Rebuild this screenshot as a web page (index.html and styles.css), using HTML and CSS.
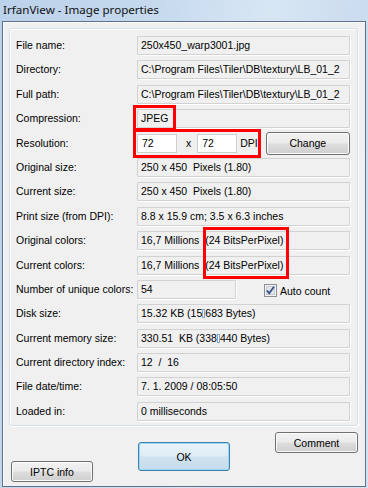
FILE: index.html
```html
<!DOCTYPE html>
<html>
  <head>
    <meta charset="utf-8">
    <meta name="viewport" content="width=device-width">
    <title>IrfanView - Image properties</title>
    <link rel="stylesheet" href="styles.css">
  </head>
  <body>
    <div class="titlebar">IrfanView - Image properties</div>
    <div class="window">
      <div class="group">
        <div class="rows">
          <div class="label">File name:</div>
          <div class="field">250x450_warp3001.jpg</div>

          <div class="label">Directory:</div>
          <div class="field">C:\Program Files\Tiler\DB\textury\LB_01_2</div>

          <div class="label">Full path:</div>
          <div class="field">C:\Program Files\Tiler\DB\textury\LB_01_2</div>

          <div class="label">Compression:</div>
          <div class="field">JPEG</div>

          <div class="label">Resolution:</div>
          <div class="res">
            <div class="edit">72</div>
            <span class="times">x</span>
            <div class="edit">72</div>
            <span class="dpi">DPI</span>
            <button class="btn change">Change</button>
          </div>

          <div class="label">Original size:</div>
          <div class="field">250 x 450  Pixels (1.80)</div>

          <div class="label">Current size:</div>
          <div class="field">250 x 450  Pixels (1.80)</div>

          <div class="label">Print size (from DPI):</div>
          <div class="field">8.8 x 15.9 cm; 3.5 x 6.3 inches</div>

          <div class="label">Original colors:</div>
          <div class="field">16,7 Millions  (24 BitsPerPixel)</div>

          <div class="label">Current colors:</div>
          <div class="field">16,7 Millions  (24 BitsPerPixel)</div>

          <div class="label">Number of unique colors:</div>
          <div class="uniq">
            <div class="field short">54</div>
            <label class="check">
              <svg width="13" height="13" viewBox="0 0 13 13">
                <rect x="0.5" y="0.5" width="12" height="12" fill="#f4f4f4" stroke="#8f8f8f"/>
                <rect x="2.5" y="2.5" width="8" height="8" fill="#e2e6ea" stroke="#c4c9cf"/>
                <path d="M3 6.5 L5.2 9.2 L10 2.8" fill="none" stroke="#3a4f8c" stroke-width="1.8"/>
              </svg>
              Auto count
            </label>
          </div>

          <div class="label">Disk size:</div>
          <div class="field">15.32 KB (15<span class="sep"></span>683 Bytes)</div>

          <div class="label">Current memory size:</div>
          <div class="field">330.51  KB (338<span class="sep"></span>440 Bytes)</div>

          <div class="label">Current directory index:</div>
          <div class="field">12  /  16</div>

          <div class="label">File date/time:</div>
          <div class="field">7. 1. 2009 / 08:05:50</div>

          <div class="label">Loaded in:</div>
          <div class="field">0 milliseconds</div>
        </div>
      </div>
      <div class="buttons">
        <button class="btn iptc">IPTC info</button>
        <button class="btn ok">OK</button>
        <button class="btn comment">Comment</button>
      </div>
    </div>

    <!-- red annotation frames drawn over the screenshot -->
    <div class="mark mark-jpeg"></div>
    <div class="mark mark-res"></div>
    <div class="mark mark-bits"></div>
  </body>
</html>
```

FILE: styles.css
```css
* {
  box-sizing: border-box;
  margin: 0;
  padding: 0;
}
body {
  width: 368px;
  height: 488px;
  overflow: hidden;
  position: relative;
  font-family: "Liberation Sans", Arial, sans-serif;
  font-size: 10.5px;
  color: #000;
  background: linear-gradient(100deg, #bcd2ea 0%, #c6daee 35%, #d8e6f4 60%, #cbdcef 80%, #d3e3f3 100%);
}
.titlebar {
  height: 21px;
  padding: 1px 0 0 3px;
  font-family: "Noto Sans", "Liberation Sans", sans-serif;
  font-size: 11.6px;
  line-height: 17px;
  color: #111;
}
.window {
  margin: 0 2px;
  height: 466px;
  border: 1px solid #5f7189;
  background: #f0f0f0;
  box-shadow: inset 1px 1px 0 #fbfbfb;
}
.group {
  margin: 6px 0 0 6px;
  width: 349px;
  height: 398px;
  border: 1px solid #d5dfe5;
  border-radius: 3px;
  box-shadow: inset 1px 1px 0 #fff, 1px 1px 0 #fff;
  padding: 7px 7px 4px 6px;
}
.rows {
  display: grid;
  grid-template-columns: 121px 213px;
  grid-auto-rows: 19px;
  row-gap: 5.4px;
}
.label {
  line-height: 19px;
  white-space: nowrap;
}
.field {
  height: 19px;
  border: 1px solid #d2d2d2;
  border-radius: 1px;
  background: #f0f0f0;
  box-shadow: 1px 1px 0 #fff;
  padding: 0 3px;
  line-height: 17px;
  white-space: pre;
  overflow: hidden;
}
.field.short {
  width: 99px;
}
.sep {
  display: inline-block;
  width: 3px;
  height: 9px;
  border: 1px solid #86a3cc;
  background: #fafafa;
  vertical-align: -1px;
}
.res, .uniq {
  display: flex;
  align-items: center;
}
.edit {
  width: 40px;
  height: 19px;
  border: 1px solid #cfcfcf;
  background: #fff;
  padding: 0 4px;
  line-height: 17px;
}
.times {
  margin: 0 6px 0 9px;
}
.dpi {
  margin-left: 3px;
}
.btn {
  font-family: "Liberation Sans", Arial, sans-serif;
  font-size: 10.5px;
  color: #000;
  border: 1px solid #707070;
  border-radius: 3px;
  background: linear-gradient(#f2f2f2 0%, #ebebeb 48%, #dddddd 52%, #cfcfcf 100%);
  box-shadow: inset 0 0 0 1px #fbfbfb;
}
.change {
  width: 84px;
  height: 23px;
  margin-left: 8px;
}
.check {
  display: flex;
  align-items: center;
  gap: 3px;
  margin: 3px 0 0 28px;
}
.check svg {
  display: block;
}
.buttons {
  display: flex;
  align-items: flex-start;
  gap: 45px;
  padding-left: 8px;
}
.iptc {
  width: 82px;
  height: 21px;
  margin-top: 35px;
}
.ok {
  width: 92px;
  height: 29px;
  margin-top: 16px;
  border-color: #3c7fb1;
  background: linear-gradient(#e9f3fa 0%, #dfedf7 48%, #cfe2f0 52%, #c6dbeb 100%);
  box-shadow: inset 0 0 0 1px #9cd8f4;
}
.comment {
  width: 83px;
  height: 21px;
  margin-top: 6px;
}
.mark {
  position: absolute;
  border: 3px solid #ff0000;
}
.mark-jpeg {
  left: 133px;
  top: 105px;
  width: 43px;
  height: 26px;
}
.mark-res {
  left: 133px;
  top: 129px;
  width: 128px;
  height: 29px;
}
.mark-bits {
  left: 203px;
  top: 227px;
  width: 86px;
  height: 52px;
}
```
